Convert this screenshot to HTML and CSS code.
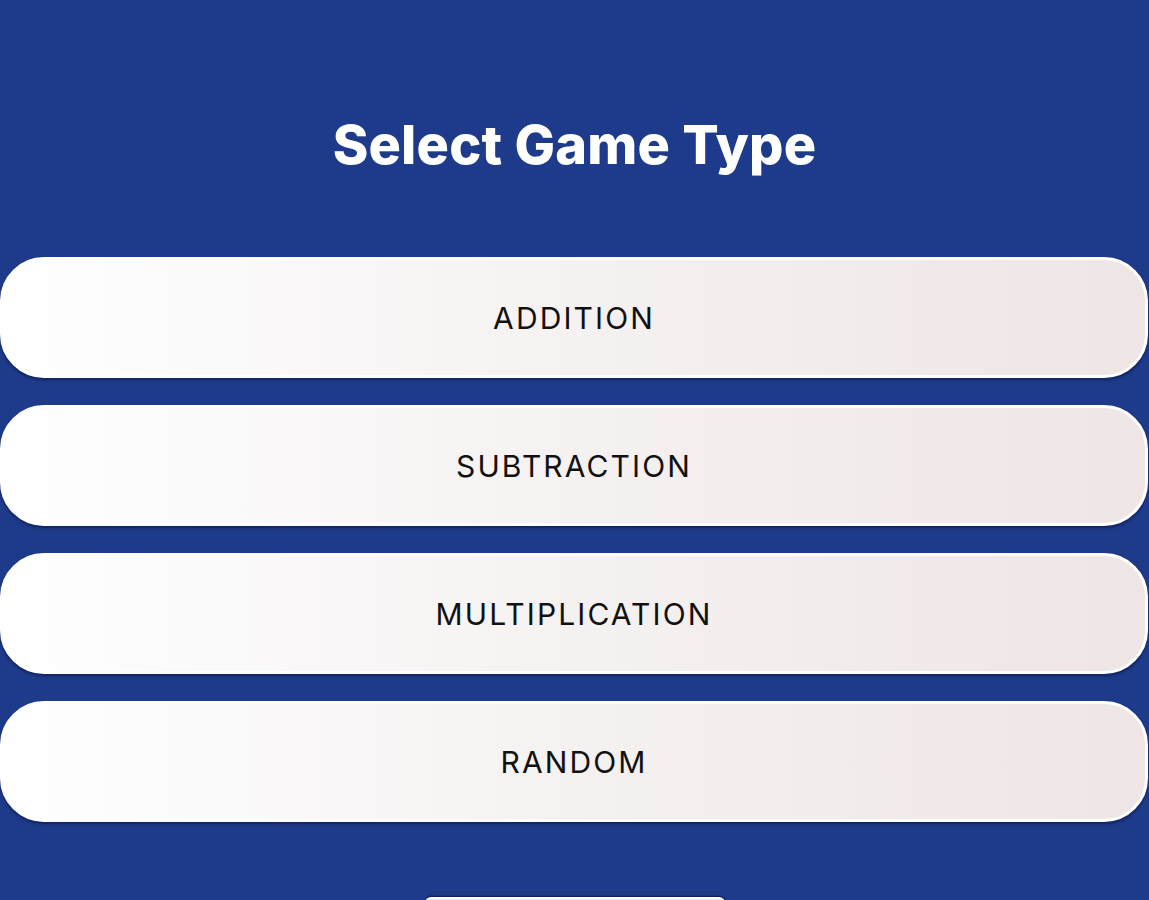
FILE: index.html
```html
<!DOCTYPE html>
<html lang="en">
<head>
<meta charset="utf-8">
<title>Select Game Type</title>
<link rel="stylesheet" href="styles.css">
</head>
<body>
<main class="screen">
  <h1 class="title">Select Game Type</h1>
  <div class="options">
    <button class="option">ADDITION</button>
    <button class="option">SUBTRACTION</button>
    <button class="option">MULTIPLICATION</button>
    <button class="option">RANDOM</button>
  </div>
  <div class="footer">
    <button class="back"></button>
  </div>
</main>
</body>
</html>
```
FILE: styles.css
```css
html, body {
  margin: 0;
  padding: 0;
  height: 100%;
  background: #1e3a8a;
  overflow: hidden;
}
.screen {
  display: flex;
  flex-direction: column;
  align-items: stretch;
  padding-top: 112px;
}
.title {
  margin: 0;
  text-align: center;
  color: #ffffff;
  font-family: "Inter", "Noto Sans", sans-serif;
  font-weight: 800;
  font-size: 54px;
  line-height: 66px;
  letter-spacing: 0.2px;
}
.options {
  display: flex;
  flex-direction: column;
  gap: 27px;
  margin-top: 79px;
}
.option {
  height: 121px;
  margin: 0 1px 0 0;
  border: 3px solid #ffffff;
  border-radius: 44px;
  background: linear-gradient(90deg, #ffffff 0%, #f7f4f4 40%, #efe5e5 100%);
  box-shadow: 0 2px 3px rgba(0, 0, 40, 0.45);
  font-family: "Inter", "Noto Sans", sans-serif;
  font-size: 30px;
  font-weight: 400;
  letter-spacing: 2.1px;
  color: #111111;
  cursor: pointer;
}
.footer {
  display: flex;
  justify-content: center;
  margin-top: 75px;
}
.back {
  width: 300px;
  height: 60px;
  border: 2px solid #ffffff;
  border-radius: 6px;
  background: #e8e8ee;
  box-shadow: 0 -1px 2px rgba(0, 0, 40, 0.6);
}
```
